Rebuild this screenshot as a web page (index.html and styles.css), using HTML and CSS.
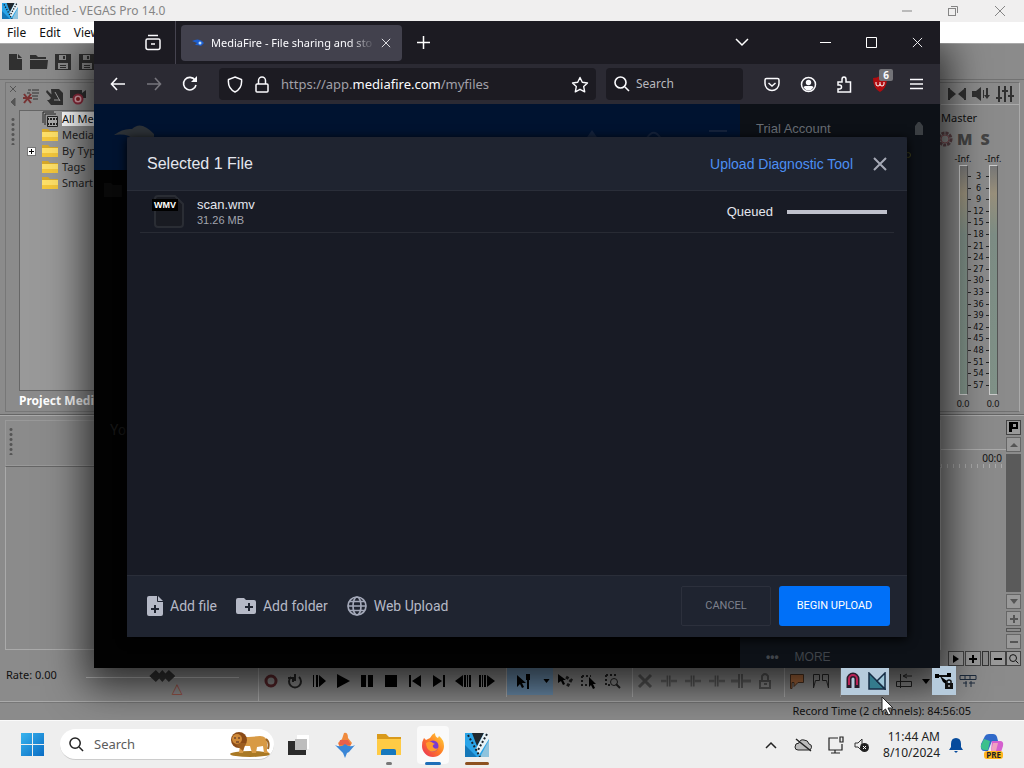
FILE: index.html
```html
<!DOCTYPE html>
<html lang="en">
<head>
<meta charset="utf-8">
<title>Desktop</title>
<link rel="stylesheet" href="styles.css">
</head>
<body>
<svg class="defs" aria-hidden="true">
  <symbol id="vegas" viewBox="0 0 24 24"><path fill="#2aa4e8" d="M0 0h24v24H0z"/><path fill="#1477b8" d="M0 12 12 24H0z"/><path fill="#20282e" d="M7 0h12l-7 13z"/><path fill="#e9f2f6" d="m19 0 5 0v6L14 22l-3-6z"/><path fill="#8fc3dd" d="m24 7v17h-9z"/><path stroke="#17212a" stroke-width="2" stroke-dasharray="2 2" d="m3 2 12 22M22 1 13 17" fill="none"/></symbol>
  <symbol id="folder" viewBox="0 0 16 12"><path fill="#d8a92a" d="M0 0h6l2 2h8v10H0z"/><path fill="#ffe169" d="M0 3h16v9H0z"/><path fill="#f5c83c" d="M0 8h16v4H0z"/></symbol>
  <symbol id="save" viewBox="0 0 16 16"><path fill="#303030" fill-rule="evenodd" d="M0 0h16v16H0zM4 1h7v5H4zm-1 8h10v6H3zm2 2v1h6v-1zm0 2v1h6v-1zM8 2v3h2V2z"/></symbol>
  <symbol id="caret" viewBox="0 0 8 5"><path d="M0 0h8L4 5z"/></symbol>
  <symbol id="x" viewBox="0 0 12 12"><path d="m1 1 10 10M11 1 1 11" fill="none" stroke="currentColor"/></symbol>
  <symbol id="glass" viewBox="0 0 16 16"><path d="M11 11l4 4M12 6.500A5.500 5.500 0 1 1 1 6.500a5.500 5.500 0 0 1 11 0z" fill="none" stroke="currentColor" stroke-width="1.600"/></symbol>
  <symbol id="trim" viewBox="0 0 20 16"><path d="M8 1v14M11 1v14" stroke="#3c3c3c" stroke-width="2"/><path d="M0 8h7M12 8h8" stroke="#4c4c4c" stroke-width="3"/></symbol>
</svg>

<div class="desktop">
  <main class="vegas">
    <header class="v-title">
      <svg class="app"><use href="#vegas"/></svg><span>Untitled - VEGAS Pro 14.0</span>
      <div class="v-win">
        <button aria-label="Minimize"><svg width="12" height="12"><path d="M1 6h10" stroke="currentColor"/></svg></button>
        <button aria-label="Restore"><svg width="12" height="12" fill="none" stroke="currentColor"><rect x="1.500" y="3.500" width="7" height="7"/><path d="M4 1.500h6.500V8"/></svg></button>
        <button aria-label="Close"><svg width="12" height="12"><use href="#x"/></svg></button>
      </div>
    </header>
    <nav class="v-menu"><button>File</button><button>Edit</button><button>View</button></nav>
    <div class="v-tools">
      <button aria-label="New"><svg width="14" height="16"><path fill="#303030" d="M1 0h8v5h5v11H1zM10 0l4 4h-4z"/></svg></button>
      <button aria-label="Open"><svg width="18" height="14"><path fill="#303030" d="M0 0h6l2 2h8v2H0zM0 5h18l-1 9H0z"/></svg></button>
      <button aria-label="Save"><svg width="16" height="16"><use href="#save"/></svg></button>
      <button aria-label="Save as"><svg width="16" height="16"><use href="#save"/></svg></button>
    </div>

    <div class="v-mid">
      <div class="rail"><svg width="8" height="22" fill="none" stroke="#555"><path d="m1 1 6 6M7 1 1 7"/><path fill="#555" d="M6 13v8l-4-4z"/></svg><i class="grip"></i></div>
      <section class="media">
        <div class="media-tools">
          <button aria-label="Remove unused"><svg width="18" height="18" fill="none"><path d="m2 6 7 9M9 6l-7 9M1 10h9" stroke="#733" stroke-width="2"/><path d="M6 2h3m1 0h7M5 5h3m2 0h7M10 8h6M11 11h5" stroke="#333"/></svg></button>
          <button aria-label="Import media"><svg width="18" height="18"><path fill="#303030" d="M5 1h8l4 4v12H5l-4-5h5zM1 2l6 6 2-3 1 8-7-1 2-2-5-6z"/><path d="m9 4 5 9M8 12h6" stroke="#999"/></svg></button>
          <button aria-label="Capture"><svg width="18" height="18"><path fill="#303030" d="M0 2h12v3l4-3v8H0z"/><circle cx="8" cy="11" r="4.500" fill="#d9a4ad" stroke="#8c2b3c" stroke-width="2"/><circle cx="8" cy="11" r="2" fill="#822"/></svg></button>
        </div>
        <ul class="tree">
          <li><svg width="16" height="16" fill="none" stroke="#222"><path d="M1 12V1h11M3 14V3h11"/><path fill="#aaa" d="M5.500 5.500h10v10h-10z"/><path d="M5 8h11M5 13h11" stroke-width="2" stroke-dasharray="2 1"/></svg><span class="picked">All Media</span></li>
          <li><svg width="16" height="12"><use href="#folder"/></svg><span>Media Bins</span></li>
          <li><button class="plus" aria-label="Expand"><svg width="7" height="7"><path d="M1 3.500h5M3.500 1v5" stroke="#000"/></svg></button><svg width="16" height="12"><use href="#folder"/></svg><span>By Type</span></li>
          <li><svg width="16" height="12"><use href="#folder"/></svg><span>Tags</span></li>
          <li><svg width="16" height="12"><use href="#folder"/></svg><span>Smart Bins</span></li>
        </ul>
        <h2>Project Media</h2>
      </section>
      <section class="master">
        <div class="m-tools">
          <svg width="18" height="14" fill="#303030"><path d="M0 1h2v12H0zM2 2l6 5-6 5zM18 1h-2v12h2zM16 2l-6 5 6 5z"/></svg>
          <svg width="18" height="14" fill="#303030"><path d="M0 4h4l5-4v14l-5-4H0z"/><path d="M11 3h1v8h-1zM14 1h2v7h2l-3 4-3-4h2z"/></svg>
          <svg width="18" height="18" fill="none" stroke="#303030" stroke-width="2"><path d="M3 1v16M9 1v16M15 1v16M0 13h6M6 6h6M12 11h6"/></svg>
        </div>
        <div class="m-name">Master</div>
        <div class="m-ms"><svg width="16" height="16" fill="none"><circle cx="8" cy="8" r="6" stroke="#5b4145" stroke-width="3" stroke-dasharray="3 1"/><circle cx="8" cy="8" r="4" stroke="#7c4a50"/></svg><b>M</b><b>S</b></div>
        <div class="m-inf"><span>-Inf.</span><span>-Inf.</span></div>
        <div class="meters"><i></i><ol><li>3</li><li>6</li><li>9</li><li>12</li><li>15</li><li>18</li><li>21</li><li>24</li><li>27</li><li>30</li><li>33</li><li>36</li><li>39</li><li>42</li><li>45</li><li>48</li><li>51</li><li>54</li><li>57</li></ol><i></i></div>
        <div class="m-inf m-val"><span>0.0</span><span>0.0</span></div>
      </section>
    </div>

    <div class="v-time">
      <div class="t-left"><div class="t-grip"><i class="grip"></i></div><div class="t-list"></div></div>
      <div class="t-right">
        <div class="t-body">
          <div class="t-mark"></div><div class="ruler">00:0</div><div class="ticks"></div>
          <div class="t-scroll"><button aria-label="Scroll right"><svg width="6" height="8"><path d="m0 0 6 4-6 4z"/></svg></button><button aria-label="Zoom in"><svg width="8" height="8"><path d="M3 0h2v3h3v2H5v3H3V5H0V3h3z"/></svg></button><i></i><button aria-label="Zoom out"><svg width="8" height="2"><path d="M0 0h8v2H0z"/></svg></button></div>
        </div>
        <div class="t-bar">
          <button aria-label="Marker"><svg width="10" height="10"><path fill-rule="evenodd" d="M0 0h9v7H3v3H0zM4 2v3h3V2z"/></svg></button>
          <button aria-label="Up" class="dim"><svg width="8" height="5"><path d="M0 5h8L4 1z"/></svg></button>
          <div class="thumb"></div>
          <button aria-label="Down" class="dim"><svg width="8" height="5"><use href="#caret"/></svg></button>
          <button aria-label="Taller" class="dim"><svg width="8" height="8"><path d="M3 0h2v3h3v2H5v3H3V5H0V3h3z"/></svg></button>
          <div class="nub"></div>
          <button aria-label="Shorter" class="dim"><svg width="8" height="2"><path d="M0 0h8v2H0z"/></svg></button>
          <button aria-label="Zoom tool"><svg width="10" height="10"><use href="#glass"/></svg></button>
        </div>
      </div>
    </div>

    <div class="transport">
      <label class="rate"><span>Rate: 0.00</span><input type="range" min="0" max="100" value="50"></label>
      <div class="t-tools">
        <button aria-label="Record"><svg width="16" height="16"><circle cx="8" cy="8" r="5" fill="none" stroke="#562529" stroke-width="3"/></svg></button>
        <button aria-label="Loop"><svg width="16" height="16" fill="none" stroke="#252525" stroke-width="2"><path d="M4 4a6 6 0 1 0 8 0M8 1v7M1 5h5v4"/></svg></button>
        <button aria-label="Play from start"><svg width="16" height="16"><path d="M2 2h1v12H2zM5 2h2v12H5zM8 2l7 6-7 6z"/></svg></button>
        <button aria-label="Play"><svg width="16" height="16"><path d="M2 1l13 7-13 7z"/></svg></button>
        <button aria-label="Pause"><svg width="16" height="16"><path d="M2 2h5v12H2zM9 2h5v12H9z"/></svg></button>
        <button aria-label="Stop"><svg width="16" height="16"><path d="M2 2h12v12H2z"/></svg></button>
        <button aria-label="Go to start"><svg width="16" height="16"><path d="M2 2h2v12H2zM14 2v12L5 8z"/></svg></button>
        <button aria-label="Go to end"><svg width="16" height="16"><path d="M12 2h2v12h-2zM2 2v12l9-6z"/></svg></button>
        <button aria-label="Previous frame"><svg width="16" height="16"><path d="M8 2v12L0 8zM9 2h2v12H9zM12 2h1v12h-1zM14 2h2v12h-2z"/></svg></button>
        <button aria-label="Next frame"><svg width="16" height="16"><path d="M8 2v12l8-6zM5 2h2v12H5zM3 2h1v12H3zM0 2h2v12H0z"/></svg></button>
        <i class="sep"></i>
        <div class="hot"><button aria-label="Normal edit"><svg width="18" height="16"><path d="M2 2v12l3-3 2 4 2-1-2-4h4z"/><path d="M11 1h4v6h-1v9h-2V7h-1z"/></svg></button><button class="slim" aria-label="Tools"><svg width="7" height="4" viewBox="0 0 8 5"><use href="#caret"/></svg></button></div>
        <button aria-label="Envelope"><svg width="16" height="16"><path d="M1 1v9l3-2 2 4 2-1-2-4h3z"/><path d="M9 4l5 3-4 7" fill="none" stroke="#222" stroke-width="3" stroke-dasharray="3 2"/></svg></button>
        <button aria-label="Selection"><svg width="16" height="16"><path d="M1 3h9M1 3v9h5" fill="none" stroke="#222" stroke-dasharray="2 2" stroke-width="2"/><path d="M8 4v10l2-2 2 4 2-1-2-4h3z"/></svg></button>
        <button aria-label="Zoom edit"><svg width="16" height="16"><path d="M1 2h12M1 2v10h4" fill="none" stroke="#222" stroke-dasharray="2 2" stroke-width="2"/><circle cx="9" cy="9" r="3.500" fill="none" stroke="#222"/><path d="m11 11 4 4" stroke="#222" stroke-width="2"/></svg></button>
        <i class="sep"></i>
        <button aria-label="Delete" class="off"><svg width="16" height="16"><path d="m2 2 12 12M14 2 2 14" stroke="#333" stroke-width="3"/></svg></button>
        <button aria-label="Trim" class="off"><svg width="16" height="16"><use href="#trim"/></svg></button>
        <button aria-label="Trim start" class="off"><svg width="16" height="16"><use href="#trim"/></svg></button>
        <button aria-label="Trim end" class="off"><svg width="16" height="16"><use href="#trim"/></svg></button>
        <button aria-label="Split" class="off"><svg width="20" height="16"><use href="#trim"/></svg></button>
        <button aria-label="Lock" class="off"><svg width="16" height="16" fill="none" stroke="#333" stroke-width="2"><path d="M3 8h10v7H3zM5 8V3q3-4 6 0v5M7 11h3"/></svg></button>
        <i class="sep"></i>
        <button aria-label="Add marker"><svg width="16" height="16"><path d="M1.500 1.500h13v8H9l-4 4v-4H3v6H1.500z" fill="#a9693d" stroke="#4c3322"/></svg></button>
        <button aria-label="Add region"><svg width="18" height="16" fill="none" stroke="#282828"><path d="M1.500 15V1.500h6v6h-4zM16.500 15V1.500h-6v6h4z"/></svg></button>
        <i class="sep"></i>
        <button aria-label="Snapping" class="on"><svg width="16" height="18" fill="none"><path d="M4 16V7a4 4 0 0 1 8 0v9" stroke="#271c2b" stroke-width="5"/><path d="M4 13V7a4 4 0 0 1 8 0v6" stroke="#b82355" stroke-width="2"/></svg></button>
        <button aria-label="Crossfades" class="on"><svg width="18" height="18"><path d="M1 1v16h16V1L9 9z" fill="#8fc0cf"/><path d="M1 1l16 16H1z" fill="#347b8c" stroke="#162c44" stroke-width="1.500"/><path d="M17 1v16L9 9z" fill="#9cc4d6" stroke="#162c44" stroke-width="1.500"/></svg></button>
        <button class="mid" aria-label="Ripple"><svg width="20" height="16" fill="none" stroke="#222"><path d="M6.500 1v14M2.500 8.500h15v5h-15zM10 3h8M13 1l-4 2 4 2"/></svg></button>
        <button class="slim" aria-label="Ripple options"><svg width="8" height="5"><use href="#caret"/></svg></button>
        <button aria-label="Lock envelopes" class="on"><svg width="18" height="18"><path d="M2 4h13" stroke="#111" stroke-width="2"/><path d="M0 2h4v4H0zM12 1h4v4h-4zM5 4l7 5-1 3-3-2z"/><path fill="#111" d="M10 11h8v6h-8z"/><path d="M12 11V9q2-2 4 0v2" fill="none" stroke="#111" stroke-width="1.500"/><path stroke="#fff" d="M14 13v2"/></svg></button>
        <button aria-label="Ignore grouping"><svg width="18" height="16" fill="none" stroke="#1d2b3c"><path d="M1 2.500h16v4H1zM6 2v5M11 2v5M4 10h4M10 10h6M7 8v6M12 8v6"/></svg></button>
      </div>
    </div>
    <footer class="v-status"><span>Record Time (2 channels): 84:56:05</span></footer>
  </main>

  <footer class="taskbar">
    <button class="start" aria-label="Start"><svg width="23" height="23"><defs><linearGradient id="w" x2="1" y2="1"><stop stop-color="#38b4ee"/><stop offset="1" stop-color="#0a6cc4"/></linearGradient></defs><path fill="url(#w)" d="M0 0h11v11H0zM12 0h11v11H12zM0 12h11v11H0zM12 12h11v11H12z"/></svg></button>
    <label class="find"><svg width="15" height="15"><use href="#glass"/></svg><input type="text" placeholder="Search" aria-label="Search">
      <svg width="42" height="26"><ellipse cx="21" cy="23" rx="20" ry="3" fill="#a97924"/><path fill="#d89a45" d="M12 6q10 0 19-1 7 0 7 7v8l2 2h-5l-1-7-6 1-1 6h-4l-2-7h-6l-1 7H10z"/><circle cx="10" cy="9" r="8" fill="#8a4a17"/><path fill="#9b5c20" d="M5 12h12l-3 8z"/><circle cx="8" cy="8" r="5" fill="#cf8a3a"/><path d="M5 7h2M9 7h2M7 11h3" stroke="#422"/><path d="M37 8q4 3 2 10" fill="none" stroke="#9b6425" stroke-width="2"/></svg></label>
    <div class="apps">
      <button aria-label="Task view"><svg width="24" height="24"><path fill="#fff" d="M10 2h12v14H10z"/><path fill="#2b2b2b" d="M1 8h18v14H1z"/><path fill="#bdbdbd" d="M8 6h12v11H8z"/></svg></button>
      <button aria-label="Assistant"><svg width="20" height="26"><path fill="#f08a3c" d="M9 1q4-1 4 5l4 5-3 5H5L3 11l4-4z"/><path fill="#e9604a" d="M5 8h8l3 5H4z"/><path fill="#3b86d6" d="M0 13q6 3 10-1 5 4 10 1l-6 7-2 1-2 5-2-5z"/></svg></button>
      <button aria-label="File Explorer"><svg width="26" height="24"><path fill="#d99a1b" d="M1 1h9l3 3h12v6H1z"/><path fill="#ffcb45" d="M1 6h24v16H1z"/><path fill="#1678be" d="M5 22v-4q0-2 2-2h11q2 0 2 2v4z"/></svg><i class="run grey"></i></button>
      <button aria-label="Firefox" class="active"><svg width="24" height="24"><defs><linearGradient id="fx" x1="1" x2="0" y2="1"><stop stop-color="#ffdf3d"/><stop offset=".5" stop-color="#ff7a26"/><stop offset="1" stop-color="#e82a5d"/></linearGradient></defs><path fill="url(#fx)" d="M3 5l2 2 4-2q2-4 5-5 0 4 3 5l1-2q5 4 5 10a11 11 0 0 1-22 0q0-5 2-8z"/><circle cx="12" cy="13" r="5.500" fill="#7b3bd0"/><path fill="#ff9a2e" d="M5 10q4-3 7 0l2 1q-3 1-2 3 2 3 5 1-3 5-8 3-4-3-4-8z"/></svg><i class="run blue"></i></button>
      <button aria-label="VEGAS Pro"><svg width="24" height="24"><use href="#vegas"/></svg><i class="run brown"></i></button>
    </div>
    <div class="tray">
      <button aria-label="Show hidden icons"><svg width="12" height="8"><path d="m1 7 5-5 5 5" fill="none" stroke="#222" stroke-width="1.500"/></svg></button>
      <svg width="18" height="14" fill="none" stroke="#222"><path fill="#bbb" d="M4 12h10a3 3 0 0 0 1-6q-1-4-5-4-4-1-5 3-4 0-4 4 0 3 3 3z"/><path d="m2 1 15 12" stroke-width="1.500"/></svg>
      <svg width="18" height="18" fill="none" stroke="#222" stroke-width="1.200"><path d="M11 2H2v12h13V8M8 14v3M4 17h9M13 1h3v5h-3z"/></svg>
      <svg width="16" height="16"><path d="M1 6h3l4-4v6M1 6v4h3l3 3" fill="none" stroke="#333"/><circle cx="10.500" cy="10.500" r="4.500" fill="#222"/><path d="m9 9 3 3m0-3-3 3" stroke="#fff"/></svg>
      <time>11:44 AM<br>8/10/2024</time>
      <svg width="14" height="16"><path fill="#064b9c" d="M7 1q5 0 5 6v3l2 3H0l2-3V7q0-6 5-6zM5 14h4l-2 2z"/></svg>
      <div class="copilot"><svg width="24" height="22"><path fill="#3069c9" d="M1 10 5 2q1-2 4-2h4q3 0 4 3l1 4h-6L8 17H4Q0 17 1 10z"/><path fill="#3cc08c" d="m1 11 3-6 6 2-2 9H5q-5 0-4-5z"/><path fill="#d560cf" d="M12 7h8q4 0 3 5l-2 6q-1 3-4 3H8l3-4z"/><path fill="#f1a1c0" d="M13 9h5l-2 8h-5z"/></svg><b>PRE</b></div>
    </div>
  </footer>

  <section class="firefox" aria-label="Firefox">
    <div class="tabs">
      <button class="view" aria-label="Firefox View"><svg width="18" height="18" fill="none" stroke="#fbfbfe" stroke-width="1.500"><path d="M4 1.500h10M3.500 5h11q1.500 0 1.500 1.500v7q0 2-2 2H4q-2 0-2-2v-7Q2 5 3.500 5zM7 10h4"/></svg></button>
      <div class="tab"><svg width="14" height="12"><path fill="#1d5fd0" d="M1 4q6-3 10 0l2 2-3 3q-2-1-6-1l2-2z"/><circle cx="9" cy="6" r="1.500" fill="#bfe0ff"/></svg><span>MediaFire - File sharing and sto</span><button aria-label="Close tab"><svg width="10" height="10" viewBox="0 0 12 12"><use href="#x"/></svg></button></div>
      <button class="new" aria-label="New tab"><svg width="13" height="13"><path d="M6.500 0v13M0 6.500h13" stroke="#fff" stroke-width="1.500"/></svg></button>
      <div class="f-win">
        <button aria-label="List tabs"><svg width="14" height="9"><path d="m1 1 6 6 6-6" fill="none" stroke="#fff" stroke-width="1.500"/></svg></button>
        <button aria-label="Minimize"><svg width="11" height="11"><path d="M0 5.500h11" stroke="#fff"/></svg></button>
        <button aria-label="Maximize"><svg width="11" height="11"><path d="M.5.5h10v10H.5z" fill="none" stroke="#fff"/></svg></button>
        <button aria-label="Close"><svg width="11" height="11" viewBox="0 0 12 12"><use href="#x"/></svg></button>
      </div>
    </div>
    <div class="nav">
      <button aria-label="Back"><svg width="16" height="14" fill="none" stroke="#fbfbfe" stroke-width="1.600"><path d="M15 7H2M7 1 1.500 7 7 13"/></svg></button>
      <button aria-label="Forward"><svg width="16" height="14" fill="none" stroke="#77767d" stroke-width="1.600"><path d="M1 7h13M9 1l5.500 6L9 13"/></svg></button>
      <button aria-label="Reload"><svg width="16" height="16"><path d="M13 4a6.300 6.300 0 1 0 1 5" fill="none" stroke="#fbfbfe" stroke-width="1.600"/><path fill="#fbfbfe" d="M15 0v6H9z"/></svg></button>
      <div class="url">
        <svg width="16" height="17" fill="none" stroke="#fbfbfe" stroke-width="1.500"><path d="M8 1l6.500 2.500q1 9-6.500 12.500Q.5 12.500 1.500 3.500z"/></svg>
        <svg width="14" height="17" fill="none" stroke="#fbfbfe" stroke-width="1.500"><path d="M2 8h10q1 0 1 1v6q0 1-1 1H2q-1 0-1-1V9q0-1 1-1zM3.500 8V4.500a3.500 3.500 0 0 1 7 0V8"/></svg>
        <a href="#">https://app.<b>mediafire.com</b>/myfiles</a>
        <button aria-label="Bookmark"><svg width="18" height="17"><path d="m9 1.500 2.300 4.800 5.200.7-3.800 3.600 1 5.200L9 13.300l-4.700 2.500 1-5.200L1.500 7l5.200-.7z" fill="none" stroke="#fbfbfe" stroke-width="1.400" stroke-linejoin="round"/></svg></button>
      </div>
      <label class="searchbox"><svg width="16" height="16"><use href="#glass"/></svg><input type="text" placeholder="Search" aria-label="Search the web"></label>
      <div class="ext">
        <button aria-label="Pocket"><svg width="16" height="15" fill="none" stroke="#fbfbfe" stroke-width="1.500"><path d="M2.500 1.500h11q1.500 0 1.500 1.500v3.500a7 7 0 0 1-14 0V3q0-1.500 1.500-1.500zM4.500 6 8 9l3.500-3"/></svg></button>
        <button aria-label="Account"><svg width="17" height="17"><circle cx="8.500" cy="8.500" r="7" fill="none" stroke="#fbfbfe" stroke-width="1.500"/><circle cx="8.500" cy="6.500" r="2.700" fill="#fbfbfe"/><path fill="#fbfbfe" d="M3.500 11.500q0-1.500 2-1.500h6q2 0 2 1.500-2 3-5 3t-5-3z"/></svg></button>
        <button aria-label="Extensions"><svg width="16" height="17" fill="none" stroke="#fbfbfe" stroke-width="1.500"><path d="M2 16h12.500V6H10V3.500Q10 1 8 1T6 3.500V6H2v3h1.500Q5.500 9 5.500 11t-2 2H2z"/></svg></button>
        <button class="ub" aria-label="Blocker"><svg width="14" height="16"><path fill="#b00c10" d="M7 0q3 2 7 2 0 10-7 14Q0 12 0 2q4 0 7-2z"/><path d="M3 6v2q0 2 2 2t2-2V6m0 2q0 2 2 2t2-2V6" fill="none" stroke="#fff"/></svg><span>6</span></button>
        <button aria-label="Menu"><svg width="13" height="12"><path d="M0 1.500h13M0 6h13M0 10.500h13" stroke="#fbfbfe" stroke-width="1.500"/></svg></button>
      </div>
    </div>

    <div class="page">
      <div class="p-main">
        <div class="p-head"><svg width="42" height="18"><path fill="#2c3136" d="M0 11Q9 4 18 5q9-9 22 5v6H20Q14 9 0 11z"/></svg><div><svg width="14" height="12"><path fill="#15233c" d="m7 1 7 10H0z"/></svg><svg width="18" height="12"><path fill="none" stroke="#15233c" stroke-width="2" d="M2 9q7-11 14 1"/></svg><svg width="18" height="4"><path fill="#15233c" d="M0 1h18v2H0z"/></svg></div></div>
        <div class="p-body"><svg width="18" height="14"><path fill="#090909" d="M0 0h7l2 2h9v12H0z"/></svg><p>You</p></div>
      </div>
      <aside>
        <div class="acct"><span>Trial Account</span><svg width="10" height="14"><path fill="#3a3e42" d="M4 0h2l3 4v9H1V4z"/></svg></div>
        <div class="badge"></div>
        <div class="more"><b>•••</b><span>MORE</span></div>
      </aside>
      <div class="dialog" role="dialog" aria-label="Selected 1 File">
        <header><h1>Selected 1 File</h1><a href="#">Upload Diagnostic Tool</a><button aria-label="Close dialog"><svg width="16" height="16" viewBox="0 0 16 16"><path d="m2 2 12 12M14 2 2 14" stroke="currentColor" stroke-width="2"/></svg></button></header>
        <div class="files"><div class="file">
          <div class="thumbn"><svg width="32" height="36"><path d="M3 12V5q0-3 3-3h17l8 8v20q0 3-3 3H6q-3 0-3-3z" fill="#191b22" stroke="#2a2d34" stroke-width="2"/></svg><b>WMV</b></div>
          <div class="fn"><span>scan.wmv</span><small>31.26 MB</small></div>
          <span class="queued">Queued</span><progress value="0" max="100" aria-label="Upload progress"></progress>
        </div></div>
        <footer>
          <button class="add"><svg width="16" height="20" fill="#b5b9c6"><path fill-rule="evenodd" d="M2 0h8v5q0 1 1 1h5v12q0 2-2 2H2q-2 0-2-2V2q0-2 2-2zm5 9v3H4v2h3v3h2v-3h3v-2H9V9z"/><path d="m11 0 5 5h-5z"/></svg>Add file</button>
          <button class="add"><svg width="20" height="16" fill="#b5b9c6"><path fill-rule="evenodd" d="M2 0h6l2 2h8q2 0 2 2v10q0 2-2 2H2q-2 0-2-2V2q0-2 2-2zm10 5v3H9v2h3v3h2v-3h3V8h-3V5z"/></svg>Add folder</button>
          <button class="add"><svg width="20" height="20" fill="none" stroke="#a3a8b8" stroke-width="1.700"><circle cx="10" cy="10" r="9"/><ellipse cx="10" cy="10" rx="4" ry="9"/><path d="M1 10h18M2.500 5.500h15M2.500 14.500h15"/></svg>Web Upload</button>
          <button class="cancel">CANCEL</button><button class="begin">BEGIN UPLOAD</button>
        </footer>
      </div>
    </div>
  </section>
  <svg class="cursor" width="14" height="20"><path d="M1 1v15l3.500-3 3 6 2.500-1-3-6h5z" fill="#fff" stroke="#222"/></svg>
</div>
</body>
</html>
```
FILE: styles.css
```css
* { box-sizing: border-box; }
body { margin: 0; font: 12px/16px "Noto Sans", sans-serif; }
button { border: 0; padding: 0; background: none; font: inherit; color: inherit; display: flex; align-items: center; justify-content: center; flex-shrink: 0; }
svg { display: block; flex-shrink: 0; }
.defs { position: absolute; width: 0; height: 0; }
input { font: inherit; color: inherit; border: 0; background: none; padding: 0; min-width: 0; outline: 0; }
h1, h2, p, ul, ol { margin: 0; padding: 0; list-style: none; }
a { text-decoration: none; color: inherit; }
.desktop { position: relative; display: flex; flex-direction: column; height: 100vh; min-height: 560px; overflow: hidden; }

/* editor window */
.vegas { flex: 1; min-height: 0; display: grid; grid-template-rows: 22px 21px 37px minmax(0, 4fr) minmax(0, 3fr) 36px 18px; background: #8b8b8b; font: 11px/14px "Noto Sans", sans-serif; color: #111; }
.v-title { display: flex; align-items: center; gap: 6px; padding-left: 2px; background: #f0efef; color: #858585; font-size: 12px; }
.v-title .app { width: 16px; height: 16px; }
.v-win { margin-left: auto; display: flex; }
.v-win button { width: 46px; }
.v-win button:last-child { width: 48px; }
.v-menu { background: #fff; display: flex; gap: 13px; padding-left: 7px; font-size: 12px; position: relative; z-index: 1; }
.v-title { position: relative; z-index: 1; }
.v-tools { display: flex; align-items: center; padding-left: 3px; border-top: 1px solid #aaa; border-bottom: 1px solid #727272; }
.v-tools button { width: 24px; }
.v-mid { display: flex; padding: 2px 4px 2px 5px; border-bottom: 1px solid #666; }
.rail { width: 14px; display: flex; flex-direction: column; gap: 10px; align-items: center; border: 1px solid #777; border-right: 0; }
.rail svg { margin-top: 2px; }
.grip { width: 4px; height: 28px; background: radial-gradient(circle, #555 1px, transparent 2px) 0 0 / 4px 5px; }
.media { flex: 1; display: flex; flex-direction: column; border: 1px solid #777; border-left: 0; }
.media-tools { display: flex; height: 27px; padding-left: 0; }
.media-tools button { width: 24px; }
.tree { flex: 1; background: #999; border: 1px solid #666; color: #222; }
.tree li { display: flex; align-items: center; height: 16px; padding-left: 22px; gap: 4px; position: relative; }
.picked { background: #fff; color: #111; }
.plus { position: absolute; left: 7px; width: 9px; height: 9px; background: #fff; border: 1px solid #777; }
.media h2 { font: bold 12px/20px "Noto Sans", sans-serif; color: #fff; height: 20px; }
.master { width: 92px; border: 1px solid #707070; border-right-color: #aaa; padding-left: 12px; display: flex; flex-direction: column; }
.m-tools { display: flex; height: 22px; gap: 6px; align-items: center; padding-left: 7px; border-bottom: 1px solid #aaa; }
.m-name { height: 22px; line-height: 26px; }
.m-ms { display: flex; align-items: center; height: 24px; gap: 4px; font: bold 16px/24px "Noto Sans", sans-serif; color: #444; margin-left: -4px; }
.m-ms b:last-child { margin-left: 4px; }
.m-inf { display: flex; height: 14px; font-size: 9px; line-height: 16px; padding-left: 7px; }
.m-val { line-height: 10px; height: 12px; }
.m-inf span { width: 30px; text-align: center; }
.meters { flex: 1; min-height: 0; display: flex; padding: 0 0 4px 18px; }
.meters > i { width: 9px; border: 1px solid #ccc; border-right-color: #555; background: linear-gradient(#777, #99907b 12%, #7d8d85 30%, #809288); }
.meters ol { width: 21px; display: flex; flex-direction: column; justify-content: space-between; padding: 6px 0 4px; font: 9px/11px "DejaVu Sans Condensed", "DejaVu Sans", sans-serif; text-align: center; }
.meters li { display: flex; justify-content: space-between; align-items: center; height: 11px; }
.meters li::before, .meters li::after { content: ""; width: 3px; height: 1px; background: #222; }

.v-time { display: flex; padding: 4px 3px 0 5px; border-top: 1px solid #aaa; }
.t-left { flex: 1; display: flex; flex-direction: column; padding-bottom: 16px; }
.t-grip { height: 46px; padding: 6px 3px; border: 1px solid #999; }
.t-grip .grip { display: block; }
.t-list { flex: 1; border: 1px solid #aaa; border-top-color: #666; }
.t-right { width: 80px; display: flex; }
.t-body { flex: 1; display: flex; flex-direction: column; }
.t-mark { height: 30px; border-bottom: 1px solid #aaa; }
.ruler { height: 14px; text-align: right; font-size: 10px; line-height: 16px; padding-right: 4px; }
.ticks { flex: 1; background: repeating-linear-gradient(90deg, #aaa 0 1px, transparent 1px 6px) 0 0 / 100% 4px no-repeat; }
.t-scroll { display: flex; gap: 1px; }
.t-scroll i { flex: 1; background: #888; border: 1px solid #333; }
.t-scroll button, .t-bar button { width: 16px; height: 15px; background: #999; border: 1px solid #444; }
.t-scroll button:first-child { margin-left: 7px; }
.t-bar { width: 15px; display: flex; flex-direction: column; gap: 2px; }
.t-bar button { width: 15px; }
.t-bar .dim { fill: #555; border-color: #666; }
.thumb { flex: 1; background: #5a5a5a; }
.nub { height: 4px; border: 1px solid #555; }

.transport { display: flex; border-bottom: 1px solid #aaa; }
.rate { display: flex; gap: 29px; padding: 2px 0 0 6px; width: 258px; }
.rate input { appearance: none; width: 153px; height: 16px; margin: 0; background: linear-gradient(#bbb, #bbb) 0 9px / 100% 1px no-repeat; }
.rate input::-webkit-slider-thumb { appearance: none; width: 26px; height: 12px; background: #333; clip-path: polygon(0 50%, 25% 0, 38% 30%, 50% 0, 62% 30%, 75% 0, 100% 50%, 75% 100%, 62% 70%, 50% 100%, 38% 70%, 25% 100%); }
.rate span { line-height: 14px; }
.rate::after { content: "△"; color: #9c4a3c; font: 14px/14px "DejaVu Sans", sans-serif; margin: 13px 0 0 -96px; }
.t-tools { display: flex; align-items: stretch; flex: 1; border-left: 1px solid #aaa; padding-bottom: 4px; }
.t-tools button { width: 24px; height: 30px; }
.t-tools .sep { width: 8px; border-right: 1px solid #aaa; }
.t-tools .hot { display: flex; background: #6a8cab; height: 29px; }
.t-tools .hot button:first-child { width: 33px; }
.t-tools .slim { width: 13px; }
.t-tools .mid { width: 30px; }
.t-tools .off { opacity: .6; }
.t-tools .on { background: #b6cbdc; position: relative; z-index: 1; height: 29px; }
.v-status { display: flex; justify-content: flex-end; padding-right: 53px; line-height: 16px; border-top: 1px solid #777; }

/* taskbar */
.taskbar { position: relative; z-index: 1; height: 48px; flex-shrink: 0; background: #eee; border-top: 1px solid #fafafa; display: flex; align-items: center; padding: 0 20px 0 21px; color: #222; }
.find { margin-left: 16px; width: 214px; height: 31px; border-radius: 16px; background: #fff; border-bottom: 1px solid #ccc; display: flex; align-items: center; padding: 0 3px 0 9px; gap: 10px; }
.find input { flex: 1; font-size: 13px; color: #555; }
.apps { display: flex; margin-left: 9px; gap: 12px; align-items: center; }
.apps button { position: relative; width: 32px; height: 38px; border-radius: 4px; }
.apps .active { background: #fafafa; }
.apps button:nth-child(1) { margin-right: 2px; }
.run { position: absolute; bottom: -1px; height: 3px; width: 16px; border-radius: 2px; background: #1d6fb8; }
.run.grey { width: 6px; background: #777; }
.run.brown { width: 24px; background: #8c5120; }
.tray { margin-left: auto; display: flex; align-items: center; gap: 9px; }
.tray > button { margin-right: 8px; }
.tray > svg:nth-of-type(1) { margin-right: 6px; }
.tray time { margin-left: 4px; width: 57px; display: flow-root; text-align: right; font-size: 12px; line-height: 16px; white-space: nowrap; }
.copilot { position: relative; margin-left: 8px; }
.copilot b { position: absolute; right: 1px; bottom: -3px; background: #ffb51b; border-radius: 3px; font-size: 8px; line-height: 8px; padding: 0 2px; }

/* browser window */
.firefox { position: absolute; z-index: 2; left: 94px; right: 84px; top: 21px; bottom: 100px; display: flex; flex-direction: column; background: #000; color: #fbfbfe; }
.vegas::after { content: ""; position: absolute; left: 94px; right: 84px; top: 43px; bottom: 100px; box-shadow: 0 10px 38px 8px rgba(0, 0, 0, .7); pointer-events: none; }
.tabs { height: 43px; flex-shrink: 0; background: #1c1b22; display: flex; align-items: center; }
.view { width: 82px; height: 43px; border-right: 1px solid #45434f; padding-left: 37px; }
.tab { margin-left: 5px; width: 221px; height: 36px; background: #42414d; border-radius: 4px; display: flex; align-items: center; padding: 0 11px 0 10px; gap: 6px; font-size: 11px; }
.tab span { flex: 1; white-space: nowrap; mask-image: linear-gradient(90deg, #000 84%, transparent); }
.new { margin-left: 15px; }
.f-win { margin-left: auto; display: flex; align-items: center; }
.f-win button { width: 46px; height: 30px; }
.f-win button:first-child { width: 60px; margin-right: 30px; }
.nav { height: 40px; flex-shrink: 0; background: #2b2a33; display: flex; align-items: center; font-size: 13px; }
.nav > button { width: 36px; }
.nav > button:first-child { margin-left: 6px; }
.url { margin-left: 11px; flex: 1; height: 32px; background: #1c1b22; border-radius: 4px; display: flex; align-items: center; padding: 0 7px 0 8px; gap: 12px; color: #a1a0a8; font-size: 13px; min-width: 0; }
.url a { flex: 1; white-space: nowrap; overflow: hidden; }
.url b { font-weight: 400; color: #fbfbfe; }
.searchbox { margin-left: 10px; width: 137px; height: 32px; background: #1c1b22; border-radius: 4px; display: flex; align-items: center; padding: 0 8px; gap: 6px; font-size: 12px; }
.searchbox input { width: 80px; }
.searchbox input::placeholder { color: #b8b8be; }
.find input::placeholder { color: #5c5c5c; }
.ext { display: flex; margin: 0 6px 0 11px; }
.ext button { width: 36px; height: 32px; }
.ub { position: relative; }
.ub span { position: absolute; right: 5px; top: 1px; background: #737378; font: bold 10px/12px "Noto Sans", sans-serif; width: 14px; border-radius: 2px; }
.page { flex: 1; position: relative; display: grid; grid-template-columns: minmax(0, 1fr) 200px; min-height: 0; }
.p-main { display: flex; flex-direction: column; }
.p-head { height: 66px; background: #001330; display: flex; justify-content: space-between; padding: 20px 13px 0 20px; }
.p-head div { display: flex; gap: 46px; padding-top: 5px; }
.p-body { padding: 13px 10px; flex: 1; background: #020202; color: #151515; font: 14px/20px Roboto, sans-serif; display: flex; flex-direction: column; }
.p-body p { padding: 223px 6px 0; }
aside { background: #0d1117; display: flex; flex-direction: column; color: #686d74; font: 13px/18px "Liberation Sans", sans-serif; padding: 16px 16px 2px; }
.acct { display: flex; justify-content: space-between; align-items: center; }
.badge { width: 6px; height: 6px; border: 1px solid #40421b; border-radius: 3px; margin: 14px 0 0 149px; }
.more { margin-top: auto; display: flex; gap: 16px; padding-left: 10px; color: #3f4349; font-size: 12px; }
.more b { font-size: 12px; }

.dialog { position: absolute; inset: 33px 33px 31px; display: flex; flex-direction: column; background: #181b25; box-shadow: 0 2px 10px #000; font-family: "Liberation Sans", sans-serif; color: #e4e6ee; }
.dialog header { height: 54px; flex-shrink: 0; background: #1f2430; border-bottom: 1px solid #2a2e39; border-radius: 3px 3px 0 0; display: flex; align-items: center; padding: 0 19px 0 20px; }
.dialog h1 { font-size: 16px; font-weight: 400; line-height: 20px; }
.dialog header a { margin-left: auto; color: #4c8ff3; font-size: 14px; }
.dialog header button { margin-left: 19px; color: #a5a9b5; }
.files { flex: 1; padding: 0 13px; min-height: 0; }
.file { height: 42px; border-bottom: 1px solid #282b34; display: flex; align-items: center; padding: 0 7px 0 12px; }
.thumbn { position: relative; width: 44px; }
.thumbn b { position: absolute; left: 0; top: 5px; width: 26px; background: #000; color: #fff; font: bold 9px/12px "Liberation Sans", sans-serif; text-align: center; }
.fn { display: flex; flex-direction: column; flex: 1; font-size: 13px; line-height: 16px; padding-left: 1px; }
.fn small { font-size: 11px; line-height: 14px; color: #a1a4ad; }
.queued { font-size: 13px; }
progress { appearance: none; width: 100px; height: 4px; margin-left: 14px; border: 0; }
progress::-webkit-progress-bar { background: #bfc1cc; }
.dialog footer { height: 62px; flex-shrink: 0; background: #1f2430; border-top: 1px solid #2a2e39; display: flex; align-items: center; padding: 0 17px 2px 20px; font: 14px/20px Roboto, sans-serif; color: #b5b9c6; }
.add { gap: 7px; margin-right: 19px; }
.cancel { margin-left: auto; width: 90px; height: 40px; border: 1px solid #2c303c; border-radius: 2px; font-size: 11px; color: #7d818d; }
.begin { margin-left: 8px; width: 111px; height: 40px; background: #0070f8; border-radius: 3px; color: #fff; font-size: 11px; }
.cursor { position: absolute; z-index: 3; left: 881px; top: 696px; }
```
